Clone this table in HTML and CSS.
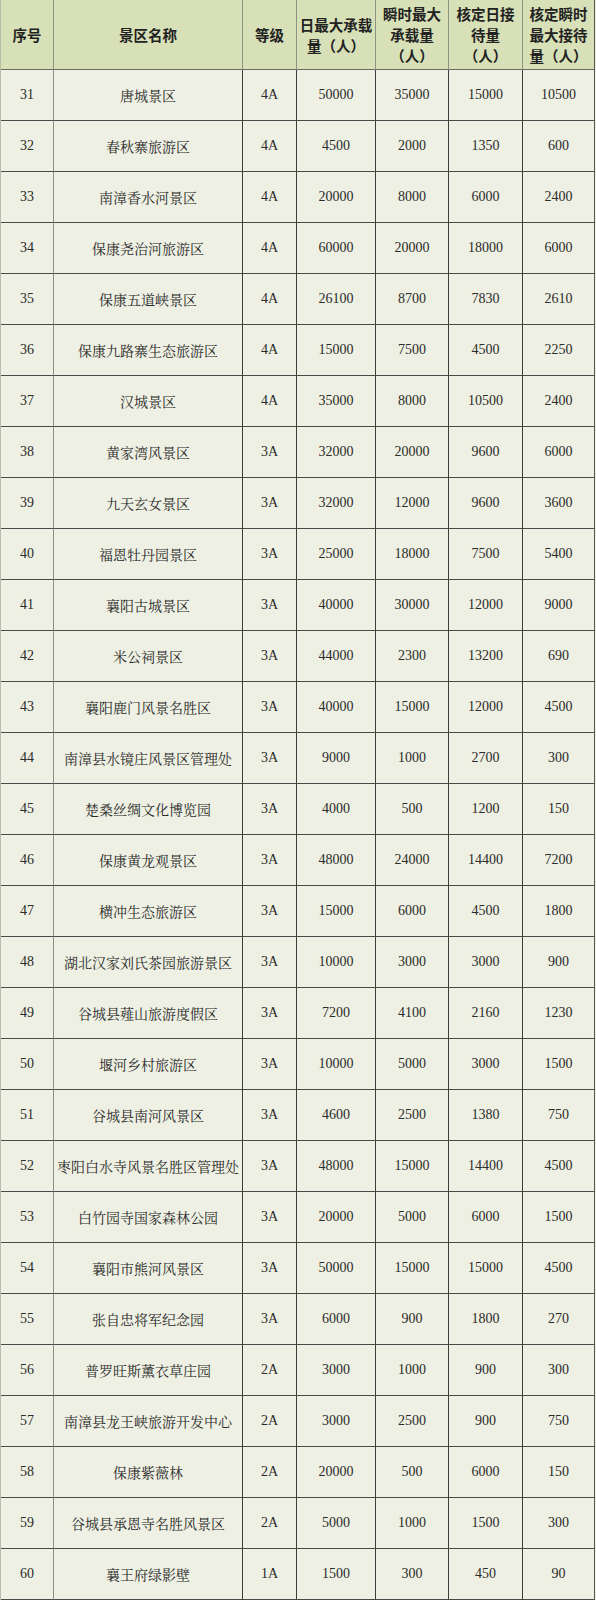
FILE: index.html
```html
<!DOCTYPE html>
<html lang="zh-CN">
<head>
<meta charset="utf-8">
<title>景区承载量</title>
<link rel="stylesheet" href="styles.css">
</head>
<body>
<div class="table">
  <div class="row head">
    <div class="c">序号</div>
    <div class="c">景区名称</div>
    <div class="c">等级</div>
    <div class="c">日最大承载<br>量（人）</div>
    <div class="c">瞬时最大<br>承载量<br>（人）</div>
    <div class="c">核定日接<br>待量<br>（人）</div>
    <div class="c">核定瞬时<br>最大接待<br>量（人）</div>
  </div>
  <div class="row"><div class="c">31</div><div class="c name">唐城景区</div><div class="c">4A</div><div class="c">50000</div><div class="c">35000</div><div class="c">15000</div><div class="c">10500</div></div>
  <div class="row"><div class="c">32</div><div class="c name">春秋寨旅游区</div><div class="c">4A</div><div class="c">4500</div><div class="c">2000</div><div class="c">1350</div><div class="c">600</div></div>
  <div class="row"><div class="c">33</div><div class="c name">南漳香水河景区</div><div class="c">4A</div><div class="c">20000</div><div class="c">8000</div><div class="c">6000</div><div class="c">2400</div></div>
  <div class="row"><div class="c">34</div><div class="c name">保康尧治河旅游区</div><div class="c">4A</div><div class="c">60000</div><div class="c">20000</div><div class="c">18000</div><div class="c">6000</div></div>
  <div class="row"><div class="c">35</div><div class="c name">保康五道峡景区</div><div class="c">4A</div><div class="c">26100</div><div class="c">8700</div><div class="c">7830</div><div class="c">2610</div></div>
  <div class="row"><div class="c">36</div><div class="c name">保康九路寨生态旅游区</div><div class="c">4A</div><div class="c">15000</div><div class="c">7500</div><div class="c">4500</div><div class="c">2250</div></div>
  <div class="row"><div class="c">37</div><div class="c name">汉城景区</div><div class="c">4A</div><div class="c">35000</div><div class="c">8000</div><div class="c">10500</div><div class="c">2400</div></div>
  <div class="row"><div class="c">38</div><div class="c name">黄家湾风景区</div><div class="c">3A</div><div class="c">32000</div><div class="c">20000</div><div class="c">9600</div><div class="c">6000</div></div>
  <div class="row"><div class="c">39</div><div class="c name">九天玄女景区</div><div class="c">3A</div><div class="c">32000</div><div class="c">12000</div><div class="c">9600</div><div class="c">3600</div></div>
  <div class="row"><div class="c">40</div><div class="c name">福恩牡丹园景区</div><div class="c">3A</div><div class="c">25000</div><div class="c">18000</div><div class="c">7500</div><div class="c">5400</div></div>
  <div class="row"><div class="c">41</div><div class="c name">襄阳古城景区</div><div class="c">3A</div><div class="c">40000</div><div class="c">30000</div><div class="c">12000</div><div class="c">9000</div></div>
  <div class="row"><div class="c">42</div><div class="c name">米公祠景区</div><div class="c">3A</div><div class="c">44000</div><div class="c">2300</div><div class="c">13200</div><div class="c">690</div></div>
  <div class="row"><div class="c">43</div><div class="c name">襄阳鹿门风景名胜区</div><div class="c">3A</div><div class="c">40000</div><div class="c">15000</div><div class="c">12000</div><div class="c">4500</div></div>
  <div class="row"><div class="c">44</div><div class="c name">南漳县水镜庄风景区管理处</div><div class="c">3A</div><div class="c">9000</div><div class="c">1000</div><div class="c">2700</div><div class="c">300</div></div>
  <div class="row"><div class="c">45</div><div class="c name">楚桑丝绸文化博览园</div><div class="c">3A</div><div class="c">4000</div><div class="c">500</div><div class="c">1200</div><div class="c">150</div></div>
  <div class="row"><div class="c">46</div><div class="c name">保康黄龙观景区</div><div class="c">3A</div><div class="c">48000</div><div class="c">24000</div><div class="c">14400</div><div class="c">7200</div></div>
  <div class="row"><div class="c">47</div><div class="c name">横冲生态旅游区</div><div class="c">3A</div><div class="c">15000</div><div class="c">6000</div><div class="c">4500</div><div class="c">1800</div></div>
  <div class="row"><div class="c">48</div><div class="c name">湖北汉家刘氏茶园旅游景区</div><div class="c">3A</div><div class="c">10000</div><div class="c">3000</div><div class="c">3000</div><div class="c">900</div></div>
  <div class="row"><div class="c">49</div><div class="c name">谷城县薤山旅游度假区</div><div class="c">3A</div><div class="c">7200</div><div class="c">4100</div><div class="c">2160</div><div class="c">1230</div></div>
  <div class="row"><div class="c">50</div><div class="c name">堰河乡村旅游区</div><div class="c">3A</div><div class="c">10000</div><div class="c">5000</div><div class="c">3000</div><div class="c">1500</div></div>
  <div class="row"><div class="c">51</div><div class="c name">谷城县南河风景区</div><div class="c">3A</div><div class="c">4600</div><div class="c">2500</div><div class="c">1380</div><div class="c">750</div></div>
  <div class="row"><div class="c">52</div><div class="c name">枣阳白水寺风景名胜区管理处</div><div class="c">3A</div><div class="c">48000</div><div class="c">15000</div><div class="c">14400</div><div class="c">4500</div></div>
  <div class="row"><div class="c">53</div><div class="c name">白竹园寺国家森林公园</div><div class="c">3A</div><div class="c">20000</div><div class="c">5000</div><div class="c">6000</div><div class="c">1500</div></div>
  <div class="row"><div class="c">54</div><div class="c name">襄阳市熊河风景区</div><div class="c">3A</div><div class="c">50000</div><div class="c">15000</div><div class="c">15000</div><div class="c">4500</div></div>
  <div class="row"><div class="c">55</div><div class="c name">张自忠将军纪念园</div><div class="c">3A</div><div class="c">6000</div><div class="c">900</div><div class="c">1800</div><div class="c">270</div></div>
  <div class="row"><div class="c">56</div><div class="c name">普罗旺斯薰衣草庄园</div><div class="c">2A</div><div class="c">3000</div><div class="c">1000</div><div class="c">900</div><div class="c">300</div></div>
  <div class="row"><div class="c">57</div><div class="c name">南漳县龙王峡旅游开发中心</div><div class="c">2A</div><div class="c">3000</div><div class="c">2500</div><div class="c">900</div><div class="c">750</div></div>
  <div class="row"><div class="c">58</div><div class="c name">保康紫薇林</div><div class="c">2A</div><div class="c">20000</div><div class="c">500</div><div class="c">6000</div><div class="c">150</div></div>
  <div class="row"><div class="c">59</div><div class="c name">谷城县承恩寺名胜风景区</div><div class="c">2A</div><div class="c">5000</div><div class="c">1000</div><div class="c">1500</div><div class="c">300</div></div>
  <div class="row"><div class="c">60</div><div class="c name">襄王府绿影壁</div><div class="c">1A</div><div class="c">1500</div><div class="c">300</div><div class="c">450</div><div class="c">90</div></div>
</div>
</body>
</html>
```

FILE: styles.css
```css
html, body {
  margin: 0;
  padding: 0;
  background: #eef0e3;
}

.table {
  width: 595px;
  border-left: 1px solid #b8bca8;
  box-sizing: border-box;
  background: #eef0e3;
}

.row {
  display: grid;
  grid-template-columns: 53px 189px 54px 79px 73px 74px 72px;
  height: 51px;
}

.c {
  box-sizing: border-box;
  border-right: 1px solid #3e3e3e;
  border-bottom: 1px solid #4a4a4a;
  display: flex;
  align-items: center;
  justify-content: center;
  text-align: center;
  font-family: "Liberation Serif", "Noto Serif CJK SC", "Noto Sans CJK SC", serif;
  font-size: 14px;
  color: #2b2b2b;
  white-space: nowrap;
  padding: 0 1px;
}

.row .c:first-child {
  border-right-color: #8d8f84;
}

.row.head {
  height: 70px;
  background: #d7e0b6;
}

.row.head .c {
  display: block;
  align-content: center;
  font-family: "Noto Sans CJK SC", sans-serif;
  font-weight: 700;
  font-size: 14.5px;
  line-height: 21px;
  color: #222;
  white-space: nowrap;
  border-right-color: #8e9282;
  border-bottom-color: #6a6c62;
  padding: 0;
}

.row.head .c:last-child,
.row .c:last-child {
  border-right-color: #55574f;
}
```
